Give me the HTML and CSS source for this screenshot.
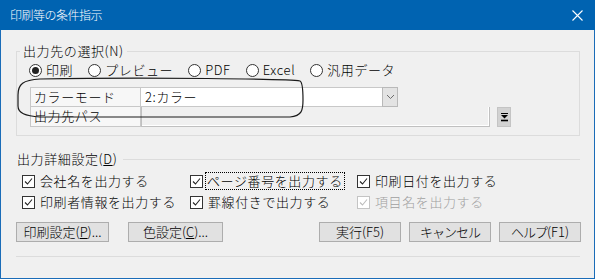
FILE: index.html
```html
<!DOCTYPE html>
<html lang="ja">
<head>
<meta charset="utf-8">
<link rel="stylesheet" href="styles.css">
</head>
<body>
<div class="window">
  <div class="titlebar">
    <span class="title">印刷等の条件指示</span>
    <svg class="close" width="11" height="11" viewBox="0 0 11 11"><path d="M0.5 0.5 L10.5 10.5 M10.5 0.5 L0.5 10.5" stroke="#fff" stroke-width="1.1" fill="none"/></svg>
  </div>
  <div class="content">
    <fieldset class="group">
      <legend>出力先の選択(N)</legend>
      <div class="radios">
        <label class="radio"><span class="rb on"></span><span>印刷</span></label>
        <label class="radio"><span class="rb"></span><span>プレビュー</span></label>
        <label class="radio"><span class="rb"></span><span>PDF</span></label>
        <label class="radio"><span class="rb"></span><span>Excel</span></label>
        <label class="radio"><span class="rb"></span><span>汎用データ</span></label>
      </div>
      <div class="grid">
        <div class="cell head first">カラーモード</div>
        <div class="combo">
          <span class="combo-text">2:カラー</span>
          <span class="combo-btn"><svg width="9" height="6" viewBox="0 0 9 6"><path d="M1 1 L4.5 4.5 L8 1" stroke="#6d6d6d" stroke-width="1" fill="none"/></svg></span>
        </div>
        <div class="cell head">出力先パス</div>
        <div class="pathrow">
          <span class="pathfield"></span>
          <span class="pathbtn"><svg width="9" height="10" viewBox="0 0 9 10"><path d="M1 1.5 H8" stroke="#000" stroke-width="1"/><path d="M1 3 H8 L4.5 6.5 Z" fill="#000"/><path d="M1 8.5 H8" stroke="#000" stroke-width="1.6"/></svg></span>
        </div>
      </div>
    </fieldset>

    <div class="sec">
      <span class="sec-label">出力詳細設定(<u>D</u>)</span>
      <span class="sec-line"></span>
    </div>

    <div class="checks">
      <label class="check"><span class="cb"><svg width="11" height="11" viewBox="0 0 11 11"><path d="M2 5.5 L4.5 8 L9 2.5" stroke="#222" stroke-width="1.1" fill="none"/></svg></span><span>会社名を出力する</span></label>
      <label class="check"><span class="cb"><svg width="11" height="11" viewBox="0 0 11 11"><path d="M2 5.5 L4.5 8 L9 2.5" stroke="#222" stroke-width="1.1" fill="none"/></svg></span><span class="focus">ページ番号を出力する</span></label>
      <label class="check"><span class="cb"><svg width="11" height="11" viewBox="0 0 11 11"><path d="M2 5.5 L4.5 8 L9 2.5" stroke="#222" stroke-width="1.1" fill="none"/></svg></span><span>印刷日付を出力する</span></label>
      <label class="check"><span class="cb"><svg width="11" height="11" viewBox="0 0 11 11"><path d="M2 5.5 L4.5 8 L9 2.5" stroke="#222" stroke-width="1.1" fill="none"/></svg></span><span>印刷者情報を出力する</span></label>
      <label class="check"><span class="cb"><svg width="11" height="11" viewBox="0 0 11 11"><path d="M2 5.5 L4.5 8 L9 2.5" stroke="#222" stroke-width="1.1" fill="none"/></svg></span><span>罫線付きで出力する</span></label>
      <label class="check disabled"><span class="cb"><svg width="11" height="11" viewBox="0 0 11 11"><path d="M2 5.5 L4.5 8 L9 2.5" stroke="#bcbcbc" stroke-width="1.1" fill="none"/></svg></span><span>項目名を出力する</span></label>
    </div>

    <div class="buttons">
      <button class="btn w93">印刷設定(<u>P</u>)...</button>
      <button class="btn w95 ml19">色設定(<u>C</u>)...</button>
      <div class="right">
        <button class="btn w82">実行(F5)</button>
        <button class="btn w82"><span class="narrow">キャンセル</span></button>
        <button class="btn w82"><span class="narrow">ヘルプ</span>(F1)</button>
      </div>
    </div>

    <div class="bottom-sep"></div>
  </div>
  <svg class="annot" width="595" height="279" viewBox="0 0 595 279">
    <path d="M300 81 C 290 79, 150 77, 40 79 C 23 80, 18 84, 18 95 L 18 106 C 18 113, 25 116, 40 117 L 290 117 C 302 116, 303 110, 303 100 C 303 88, 302 82, 300 81 Z" fill="none" stroke="#1a1a1a" stroke-width="1.2"/>
  </svg>
</div>
</body>
</html>
```
FILE: styles.css
```css
body {
  margin: 0;
  font-family: "Noto Sans CJK JP", "Noto Sans", sans-serif;
  font-weight: 300;
  color: #000;
}
.window {
  width: 595px;
  height: 279px;
  display: flex;
  flex-direction: column;
  position: relative;
  background: #f0f0f0;
}
.titlebar {
  height: 30px;
  flex: none;
  background: #0063b1;
  display: flex;
  align-items: center;
  justify-content: space-between;
  padding: 0 12px 0 10px;
  color: #fff;
}
.title {
  font-size: 12px;
  letter-spacing: -0.5px;
  line-height: 14px;
}
.close { display: block; }
.content {
  flex: 1;
  border: 1px solid #1a6cb8;
  border-top: none;
  padding: 0 14px 0 15px;
  display: flex;
  flex-direction: column;
  font-size: 13px;
  letter-spacing: 0.6px;
}
.group {
  margin: 14px 0 0;
  padding: 4px 0 8px 3px;
  border: 1px solid #dcdcdc;
  min-width: 0;
}
.group legend {
  padding: 0 3px;
  font-size: 13px;
  line-height: 14px;
}
.radios {
  display: flex;
  align-items: center;
  gap: 15px;
  height: 16px;
  margin-left: 9px;
}
.radio {
  display: flex;
  align-items: center;
  gap: 4px;
  line-height: 16px;
}
.radio .latin { letter-spacing: 0; }
.rb {
  width: 13px;
  height: 13px;
  box-sizing: border-box;
  border: 1px solid #333;
  border-radius: 50%;
  background: #fff;
  display: flex;
  align-items: center;
  justify-content: center;
}
.rb.on::after {
  content: "";
  width: 7px;
  height: 7px;
  border-radius: 50%;
  background: #222;
}
.grid {
  margin: 9px 0 0 10px;
  display: grid;
  grid-template-columns: 111px 1fr;
  grid-template-rows: 20px 20px;
}
.cell {
  box-sizing: border-box;
  border: 1px solid #c8c8c8;
  border-top: none;
  background: #f7f7f7;
  padding-left: 3px;
  line-height: 18px;
}
.cell.first { border-top: 1px solid #c8c8c8; }
.combo {
  display: flex;
  width: 257px;
  height: 20px;
  box-sizing: border-box;
  border-top: 1px solid #c8c8c8;
}
.combo-text {
  flex: 1;
  background: #fff;
  padding-left: 4px;
  line-height: 18px;
  border-bottom: 1px solid #c8c8c8;
}
.combo-btn {
  width: 16px;
  height: 20px;
  margin-top: -1px;
  box-sizing: border-box;
  border: 1px solid #b9b9b9;
  background: #e3e3e3;
  display: flex;
  align-items: center;
  justify-content: center;
}
.pathrow {
  display: flex;
  gap: 7px;
  align-items: flex-start;
}
.pathfield {
  width: 349px;
  height: 20px;
  box-sizing: border-box;
  border: 1px solid #c0c0c0;
  border-top: none;
  box-shadow: inset -1px -1px 0 #ffffff;
  background: #f0f0f0;
}
.pathbtn {
  width: 14px;
  height: 20px;
  box-sizing: border-box;
  background: #d2d2d2;
  border: 1px solid #c4c4c4;
  display: flex;
  align-items: center;
  justify-content: center;
}
.sec {
  margin-top: 16px;
  display: flex;
  align-items: center;
  height: 14px;
  padding-left: 1px;
}
.sec-label { line-height: 14px; }
.sec-line {
  flex: 1;
  height: 1px;
  background: #dcdcdc;
  margin-left: 6px;
}
.checks {
  margin: 7px 0 0 6px;
  display: grid;
  grid-template-columns: 168px 167px auto;
  grid-auto-rows: 16px;
  row-gap: 5px;
}
.check {
  display: flex;
  align-items: center;
  gap: 5px;
  line-height: 16px;
  white-space: nowrap;
}
.cb {
  width: 13px;
  height: 13px;
  box-sizing: border-box;
  border: 1px solid #333;
  background: #fff;
  display: flex;
  align-items: center;
  justify-content: center;
}
.cb svg { display: block; }
.focus {
  outline: 1px dotted #000;
  outline-offset: 0;
  padding: 0 1px;
  margin-left: -2px;
}
.disabled { color: #a0a0a0; }
.disabled .cb { border-color: #c4c4c4; }
.buttons {
  margin-top: 12px;
  display: flex;
  height: 20px;
}
.btn {
  height: 20px;
  box-sizing: border-box;
  border: 1px solid #adadad;
  background: #e1e1e1;
  font-family: inherit;
  font-weight: 300;
  font-size: 13px;
  letter-spacing: 0;
  line-height: 16px;
  padding: 0;
  color: #000;
}
.btn u { text-underline-offset: 1px; }
.w93 { width: 93px; }
.w95 { width: 95px; }
.w82 { width: 82px; }
.ml19 { margin-left: 19px; }
.right {
  margin-left: auto;
  margin-right: -1px;
  display: flex;
  gap: 8px;
}
.narrow { letter-spacing: -1px; }
.bottom-sep {
  margin-top: 14px;
  height: 1px;
  background: #dcdcdc;
}
.annot {
  position: absolute;
  left: 0;
  top: 0;
  pointer-events: none;
}
```
